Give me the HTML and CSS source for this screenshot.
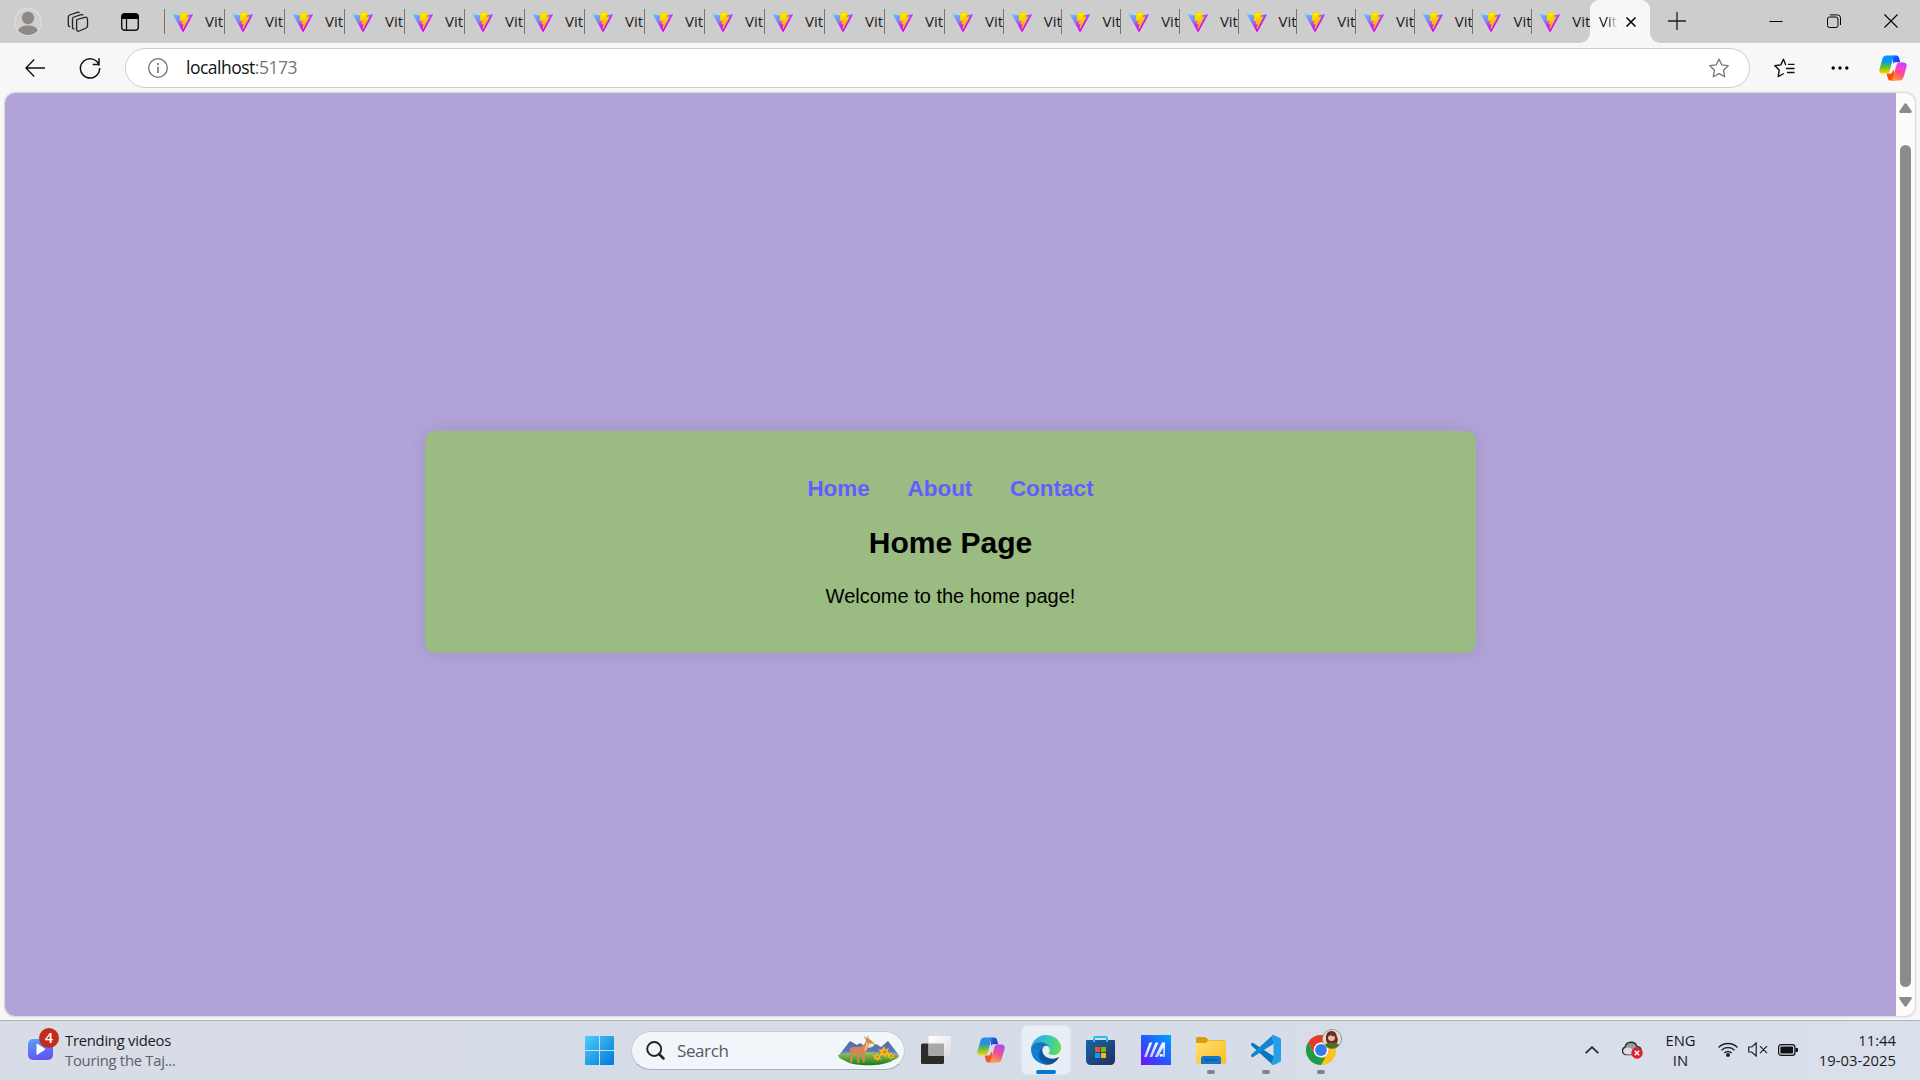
FILE: index.html
```html
<!DOCTYPE html>
<html lang="en">
<head>
<meta charset="utf-8">
<title>Vite + React</title>
<link rel="stylesheet" href="styles.css">
</head>
<body>
<svg class="defs" width="0" height="0" aria-hidden="true">
  <defs>
    <linearGradient id="vite-a" x1="0" x2=".55" y1=".1" y2=".75"><stop offset="0" stop-color="#41D1FF"/><stop offset=".5" stop-color="#9a6cff"/><stop offset="1" stop-color="#D800FF"/></linearGradient>
    <linearGradient id="vite-b" x1="43.4%" x2="50.3%" y1="2.2%" y2="89%"><stop offset="0" stop-color="#FFF000"/><stop offset=".3" stop-color="#FBDD00"/><stop offset="1" stop-color="#FFA800"/></linearGradient>
    <linearGradient id="cp-a" x1="0" y1="0" x2="0" y2="1"><stop offset="0" stop-color="#2b8af0"/><stop offset=".35" stop-color="#2493d0"/><stop offset=".62" stop-color="#6dbb45"/><stop offset="1" stop-color="#f7d51d"/></linearGradient>
    <linearGradient id="cp-b" x1=".7" y1="0" x2=".3" y2="1"><stop offset="0" stop-color="#a94bf2"/><stop offset=".5" stop-color="#f2508e"/><stop offset="1" stop-color="#ffa04a"/></linearGradient>
    <linearGradient id="cp-c" x1="0" y1="0" x2="1" y2="1"><stop offset="0" stop-color="#1d6fe0"/><stop offset="1" stop-color="#3422b8"/></linearGradient>
    <symbol id="vite" viewBox="0 0 256 257">
      <path fill="url(#vite-a)" d="M255.153 37.938L134.897 252.976c-2.483 4.44-8.862 4.466-11.382.048L.875 37.958c-2.746-4.814 1.371-10.646 6.827-9.67l120.385 21.517a6.537 6.537 0 0 0 2.322-.004l117.867-21.483c5.438-.991 9.574 4.796 6.877 9.62Z"/>
      <path fill="url(#vite-b)" stroke="#f3c800" stroke-width="8" d="M185.432.063L96.44 17.501a3.268 3.268 0 0 0-2.634 3.014l-5.474 92.456a3.268 3.268 0 0 0 3.997 3.378l24.777-5.718c2.318-.535 4.413 1.507 3.936 3.838l-7.361 36.047c-.495 2.426 1.782 4.5 4.151 3.78l15.304-4.649c2.372-.72 4.652 1.36 4.15 3.788l-11.698 56.621c-.732 3.542 3.979 5.473 5.943 2.437l1.313-2.028l72.516-144.72c1.215-2.423-.88-5.186-3.54-4.672l-25.505 4.922c-2.396.462-4.435-1.77-3.759-4.114l16.646-57.705c.677-2.35-1.37-4.583-3.769-4.113Z"/>
    </symbol>
    <symbol id="copilot" viewBox="0 0 28 26">
      <path fill="url(#cp-c)" d="M14 .5h3.4c1.3 0 2.1.9 2.500 2.100l1.400 4.600h-4.800c-1.200 0-2 .6-2.400 1.800Z"/>
      <path fill="#f0561d" d="M7.500 18.600h5l2.300-4 1.500 11h-4.900c-1.300 0-2.100-.9-2.500-2.100Z"/>
      <path fill="url(#cp-a)" d="M7.300.5h9.200c-1.200.3-1.800 1.100-2.200 2.300L10.700 15.500c-.6 2-1.600 3.100-3.500 3.100H3.600C.8 18.600-.2 16.400.5 13.900L3.400 4C4.100 1.700 5.200.5 7.300.5Z"/>
      <path fill="url(#cp-b)" d="M20.700 25.500h-9.200c1.200-.3 1.800-1.100 2.200-2.300l3.600-12.700c.6-2 1.600-3.100 3.500-3.100h3.600c2.800 0 3.800 2.200 3.100 4.700L24.600 22c-.7 2.300-1.800 3.500-3.900 3.500Z"/>
    </symbol>
  </defs>
</svg>

<div class="browser">
  <header class="tabstrip">
    <div class="strip-tools">
      <svg class="avatar" width="28" height="28" viewBox="0 0 28 28"><circle cx="14" cy="14" r="13.3" fill="#d0cfcd" stroke="#e0dfdc" stroke-width="1.200"/><circle cx="14" cy="10" r="6.200" fill="#8c8987"/><path fill="#8c8987" d="M4.100 22.600C5.500 19.200 9 17.500 14 17.500s8.500 1.700 9.900 5.100A13 13 0 0 1 14 27 13 13 0 0 1 4.100 22.600Z"/></svg>
      <svg class="workspaces" width="22" height="22" viewBox="0 0 22 22" fill="none" stroke="#222" stroke-width="1.300"><path d="m10.200 8.500 7.600-2.200c1.500-.4 2.700.4 2.700 1.800v7c0 .9-.5 1.600-1.400 1.900l-6.800 3c-1.400.6-2.700-.1-2.700-1.500V9.700c0-.6.200-1 .6-1.200Z"/><path d="M7.300 18c-1 .1-1.800-.6-1.800-1.700V8c0-1.100.5-1.700 1.400-2l7.200-2.300c.9-.3 1.700 0 2.100.7M3.200 15.800C2 15.700 1.300 15 1.300 14V6c0-1 .5-1.600 1.400-2l7.500-2.700c1-.3 1.800 0 2.200.7"/></svg>
      <svg class="tabs-icon" width="18" height="18" viewBox="0 0 18 18"><rect x=".7" y=".7" width="16.600" height="16.600" rx="3" fill="none" stroke="#111" stroke-width="1.400"/><path d="M.5 3.500a3 3 0 0 1 3-3h11a3 3 0 0 1 3 3V6H.5Z" fill="#000"/><path d="M5.500 6v11.500" stroke="#111" stroke-width="1.300"/></svg>
    </div>
    <div class="tabs">
      <div class="tab"><svg><use href="#vite"/></svg><span>Vit</span></div>
      <div class="tab"><svg><use href="#vite"/></svg><span>Vit</span></div>
      <div class="tab"><svg><use href="#vite"/></svg><span>Vit</span></div>
      <div class="tab"><svg><use href="#vite"/></svg><span>Vit</span></div>
      <div class="tab"><svg><use href="#vite"/></svg><span>Vit</span></div>
      <div class="tab"><svg><use href="#vite"/></svg><span>Vit</span></div>
      <div class="tab"><svg><use href="#vite"/></svg><span>Vit</span></div>
      <div class="tab"><svg><use href="#vite"/></svg><span>Vit</span></div>
      <div class="tab"><svg><use href="#vite"/></svg><span>Vit</span></div>
      <div class="tab"><svg><use href="#vite"/></svg><span>Vit</span></div>
      <div class="tab"><svg><use href="#vite"/></svg><span>Vit</span></div>
      <div class="tab"><svg><use href="#vite"/></svg><span>Vit</span></div>
      <div class="tab"><svg><use href="#vite"/></svg><span>Vit</span></div>
      <div class="tab narrow"><svg><use href="#vite"/></svg><span>Vit</span></div>
      <div class="tab narrow"><svg><use href="#vite"/></svg><span>Vit</span></div>
      <div class="tab narrow"><svg><use href="#vite"/></svg><span>Vit</span></div>
      <div class="tab narrow"><svg><use href="#vite"/></svg><span>Vit</span></div>
      <div class="tab narrow"><svg><use href="#vite"/></svg><span>Vit</span></div>
      <div class="tab narrow"><svg><use href="#vite"/></svg><span>Vit</span></div>
      <div class="tab narrow"><svg><use href="#vite"/></svg><span>Vit</span></div>
      <div class="tab narrow"><svg><use href="#vite"/></svg><span>Vit</span></div>
      <div class="tab narrow"><svg><use href="#vite"/></svg><span>Vit</span></div>
      <div class="tab narrow"><svg><use href="#vite"/></svg><span>Vit</span></div>
      <div class="tab narrow"><svg><use href="#vite"/></svg><span>Vit</span></div>
    </div>
    <div class="tab-active"><span>Vit</span><svg width="10" height="10" viewBox="0 0 10 10" stroke="#000" stroke-width="1.500"><path d="m.5.5 9 9m0-9-9 9"/></svg></div>
    <svg class="new-tab" width="18" height="18" viewBox="0 0 18 18" stroke="#1c1c1c" stroke-width="1.300"><path d="M9 0v18M0 9h18"/></svg>
    <div class="window-buttons">
      <svg width="14" height="14" viewBox="0 0 14 14" stroke="#000"><path d="M.5 7.500h13"/></svg>
      <svg width="14" height="14" viewBox="0 0 14 14" fill="none" stroke="#000"><rect x=".5" y="3" width="10.500" height="10.500" rx="2"/><path d="M3 .900h7.500a3 3 0 0 1 3 3V11"/></svg>
      <svg width="14" height="14" viewBox="0 0 14 14" stroke="#000" stroke-width="1.100"><path d="m.5.5 13 13m0-13-13 13"/></svg>
    </div>
  </header>

  <div class="toolbar">
    <svg class="back" width="20" height="18" viewBox="0 0 20 18" fill="none" stroke="#111" stroke-width="1.400"><path d="M9.200.6.900 9l8.300 8.400M1 9h19"/></svg>
    <svg class="reload" width="22" height="22" viewBox="0 0 22 22" fill="none" stroke="#111" stroke-width="1.500"><path d="M20.200 8.600A9.600 9.600 0 1 0 20.600 11M20 1.200v6.300h-6.300"/></svg>
    <div class="address">
      <svg class="info" width="20" height="20" viewBox="0 0 20 20"><circle cx="10" cy="10" r="9.300" fill="none" stroke="#707070" stroke-width="1.300"/><path d="M10 8.500V15" stroke="#707070" stroke-width="1.600"/><circle cx="10" cy="6" r="1.100" fill="#707070"/></svg>
      <span class="url">localhost<span class="port">:5173</span></span>
      <svg class="star" width="20" height="20" viewBox="0 0 20 20" fill="none" stroke="#767676" stroke-width="1.300" stroke-linejoin="round"><path d="m10 1.100 2.700 5.700 6.500.9-4.700 4.500 1.200 6.500-5.700-3.100-5.700 3.100 1.200-6.500L.8 7.700l6.500-.9Z"/></svg>
    </div>
    <svg class="favorites" width="21" height="20" viewBox="0 0 21 20" fill="none" stroke="#111" stroke-width="1.400" stroke-linejoin="round"><path d="M12 6.700h-.3L9.400 1.200 6.800 6.900.8 7.700l4.400 4.400-1 6.500 5.600-3.100"/><path d="M14 6.400h6.500M12 10.500h8.500M13 14.500h7.500"/></svg>
    <svg class="more" width="18" height="4" viewBox="0 0 18 4"><circle cx="2.200" cy="2" r="1.700"/><circle cx="9" cy="2" r="1.700"/><circle cx="15.800" cy="2" r="1.700"/></svg>
    <svg class="sidebar-copilot" width="28" height="26"><use href="#copilot"/></svg>
  </div>

  <div class="viewport">
    <main class="page">
      <section class="card">
        <nav class="links"><a>Home</a><a>About</a><a>Contact</a></nav>
        <h1>Home Page</h1>
        <p>Welcome to the home page!</p>
      </section>
    </main>
    <div class="scrollbar">
      <svg width="13" height="10" viewBox="0 0 13 10"><path d="M5.300.9a1.400 1.400 0 0 1 2.400 0l4.900 7.200c.5.900 0 1.900-1 1.900H1.400c-1 0-1.500-1-1-1.900Z" fill="#8b8b8b"/></svg>
      <div class="thumb"></div>
      <svg width="13" height="10" viewBox="0 0 13 10"><path d="M5.300 9.100a1.400 1.400 0 0 0 2.400 0l4.900-7.200c.5-.9 0-1.900-1-1.900H1.400c-1 0-1.500 1-1 1.900Z" fill="#8b8b8b"/></svg>
    </div>
  </div>
</div>

<footer class="taskbar">
  <div class="widget">
    <svg width="33" height="34" viewBox="0 0 33 34">
      <defs><linearGradient id="vid" x1="0" y1="0" x2=".3" y2="1"><stop stop-color="#5aa2fb"/><stop offset="1" stop-color="#6257f2"/></linearGradient></defs>
      <rect x="1" y="12" width="25" height="21" rx="5" fill="url(#vid)"/><path d="m10 17 8 5.200-8 5.200Z" fill="#fff" stroke="#fff" stroke-linejoin="round"/>
      <circle cx="22" cy="11" r="10" fill="#c42b1c"/><text x="22" y="16" text-anchor="middle" fill="#fff" class="badge">4</text>
    </svg>
    <div class="headline"><span>Trending videos</span><span class="sub">Touring the Taj...</span></div>
  </div>
  <div class="apps">
    <svg class="start" width="29" height="29" viewBox="0 0 29 29"><defs><linearGradient id="win" x1="0" y1="0" x2="1" y2="1"><stop stop-color="#4ccdfd"/><stop offset="1" stop-color="#0078d7"/></linearGradient></defs><path fill="url(#win)" d="M1 0h13v14H0V1a1 1 0 0 1 1-1Zm14 0h13a1 1 0 0 1 1 1v13H15ZM0 15h14v14H1a1 1 0 0 1-1-1Zm15 0h14v13a1 1 0 0 1-1 1H15Z"/></svg>
    <div class="search">
      <svg width="19" height="19" viewBox="0 0 19 19" fill="none" stroke="#222"><circle cx="8.200" cy="8" r="7" stroke-width="1.900"/><path d="m13 13 4.500 4.500" stroke-width="2.500" stroke-linecap="round"/></svg>
      <span>Search</span>
      <svg class="deer" width="61" height="31" viewBox="0 0 61 31">
        <defs><linearGradient id="mt" x1="0" y1="0" x2="0" y2="1"><stop stop-color="#5966ae"/><stop offset=".6" stop-color="#5876bd"/><stop offset="1" stop-color="#a1b9df"/></linearGradient><linearGradient id="gr" x1="0" y1="0" x2="0" y2="1"><stop stop-color="#9cc65b"/><stop offset="1" stop-color="#177b19"/></linearGradient></defs>
        <path fill="url(#mt)" d="M1 20 12 6l7 4 3-2 8 5 4-1 4-3 5 3 7-6 10 13v3H1Z"/>
        <path fill="url(#gr)" d="M0 20c13-3 38-4 61 0 0 4-5 4-7 6-9 5-34 6-45 1-2-2-9-3-9-7Z"/>
        <path fill="#d38654" d="M12 13.500c2-2 5-1.500 9-1.500 4 0 6-3 7-7l-2.500-4 3 2 .8 1V0l1.700 4L35 6.500l-1.500 1.500-2.500.5c-.5 5-1.500 8-4.500 10l.5 9h-2l-1.500-8.500-1.500 0-1 9h-2l.5-9c-2 0-3-.5-4-1l-1.500 9.500h-2L12.500 18Z"/><path fill="#f3bb86" d="M28.500 7c2 0 2 2 1 5s-3 4-4 4c2-2 2-6 3-9Z"/>
        <circle cx="34.500" cy="9.500" r="2.300" fill="#a7ba45"/><circle cx="34" cy="10" r="1.200" fill="#fff"/>
        <g fill="#f9b91c"><path d="m46 11 1.500 3.500L51 13l-1.500 3.500 3 2-4 .5-.5 4-2.500-3-4 1 1.500-3.500-3-3h4Z"/><path d="m39 18 1.200 2.500 3-.5-1.500 2 2 2.500-3-.2-1 2-1.500-2.200-2.700.7 1-2.300-2-2.300h3Z"/><path d="m53 17 1 2.300 2.500-.3-1.500 2 1.500 2-2.600-.2-1 2-1.200-2.300-2.500.3 1-2.300-1.500-1.700h3Z"/></g>
        <g fill="#c7761a"><circle cx="46.500" cy="17" r="1.400"/><circle cx="39.300" cy="22" r="1"/><circle cx="53" cy="21" r="1"/></g>
      </svg>
    </div>
    <div class="app"><svg width="30" height="28" viewBox="0 0 30 28"><defs><linearGradient id="tv" x1="0" y1="0" x2="1" y2="1"><stop stop-color="#fff"/><stop offset="1" stop-color="#dedede"/></linearGradient></defs><rect y="7.500" width="23" height="20.500" rx="1.500" fill="#2c2c2b"/><rect x="7.500" width="22.500" height="20" rx="1.500" fill="url(#tv)"/><path d="M7.500 7.500H23V20H7.500Z" fill="#a9a9a8"/></svg></div>
    <div class="app"><svg width="28" height="26"><use href="#copilot"/></svg></div>
    <div class="app active"><svg width="30" height="30" viewBox="0 0 256 256">
      <defs><linearGradient id="e1" x1=".2" y1=".7" x2="1" y2=".7"><stop stop-color="#0c59a4"/><stop offset="1" stop-color="#114a8b"/></linearGradient><linearGradient id="e2" x1=".7" y1="0" x2=".3" y2="1"><stop stop-color="#1768a8"/><stop offset=".5" stop-color="#1380cf"/><stop offset="1" stop-color="#0b82dc"/></linearGradient><linearGradient id="e3" x1="0" y1=".3" x2="1" y2=".5"><stop stop-color="#2fa5dc"/><stop offset=".5" stop-color="#34c6c4"/><stop offset="1" stop-color="#62de55"/></linearGradient></defs>
      <path fill="url(#e1)" d="M231 190.500c-3.400 1.800-6.900 3.400-10.500 4.700-11.500 4.300-23.600 6.500-35.900 6.500-47.300 0-88.500-32.500-88.500-74.300 0-11.400 6.400-21.900 16.400-27.300-42.800 1.800-53.800 46.400-53.800 72.500 0 73.900 68.100 81.400 82.800 81.400 7.900 0 19.800-2.300 27-4.600l1.300-.4c27.600-9.500 51-28.100 66.600-52.800 2.100-3.300-1.700-7.500-5.400-5.700Z"/>
      <path fill="url(#e2)" d="M105.700 241.400c-8.900-5.500-16.600-12.800-22.700-21.300-27.200-37.200-18.900-89.400 18.300-116.500 3.900-2.800 7.800-5.200 11.200-7.500 3.200-1.500 8.400-4.100 15.500-4 9.900.1 19.200 4.800 25 12.700 4 5.300 6.300 11.700 6.400 18.400 0-.2 24.500-79.500-80-79.500C35.500 43.700.1 85.400.1 121.900-.3 141.200 3.600 160.600 11.800 178.100c27.600 58.800 94.700 87.600 156.400 67.200-20.800 6.600-44.100 4-62.500-3.900Z"/>
      <path fill="url(#e3)" d="M152.300 148.900c-.8 1-3.200 2.500-3.200 5.700 0 2.600 1.700 5.200 4.800 7.300 14.400 10.100 41.700 8.700 41.800 8.700 10.700 0 21.200-2.900 30.500-8.300 18.800-11 30.400-31.200 30.500-53 .3-22.400-8-37.300-11.300-43.900C224.100 23.900 177.700 0 127.300 0 56.200 0 .9 57.200 0 128c.5-36.500 36.800-66 80-66 3.500 0 23.500.3 42 10.100 16.300 8.500 24.900 18.900 30.800 29.100 6.100 10.700 7.200 24.100 7.200 29.500 0 5.300-2.700 13.300-7.700 18.200Z"/>
    </svg></div>
    <div class="app store"><svg width="29" height="29" viewBox="0 0 29 29"><defs><linearGradient id="st" x1="0" y1="0" x2="1" y2="1"><stop stop-color="#1466aa"/><stop offset="1" stop-color="#272e5a"/></linearGradient></defs><path d="M8 5V2.500A1.500 1.500 0 0 1 9.500 1h10A1.500 1.500 0 0 1 21 2.500V5" fill="none" stroke="#29bdec" stroke-width="2"/><path fill="url(#st)" d="M1 4h27a1 1 0 0 1 1 1v19.500a4.500 4.500 0 0 1-4.500 4.500h-20A4.500 4.500 0 0 1 0 24.500V5a1 1 0 0 1 1-1Z"/><path fill="#29bdec" d="M7 4h2v2H7zm13 0h2v2h-2z"/><path fill="#f25022" d="M9 11h5v5H9z"/><path fill="#7fba00" d="M15 11h5v5h-5z"/><path fill="#00a4ef" d="M9 17h5v5H9z"/><path fill="#ffb900" d="M15 17h5v5h-5z"/></svg></div>
    <div class="app"><svg width="30" height="30" viewBox="0 0 30 30"><defs><linearGradient id="ma" x1="1" y1="0" x2="0" y2="1"><stop stop-color="#00a3ff"/><stop offset=".5" stop-color="#245bfb"/><stop offset="1" stop-color="#6d12fb"/></linearGradient><linearGradient id="mw" x1="0" y1="0" x2="0" y2="1"><stop stop-color="#fff"/><stop offset="1" stop-color="#c9c8ff"/></linearGradient></defs><path fill="url(#ma)" d="M0 0h30v30H0z"/><path fill="url(#mw)" d="M8.500 7.500h2.800L5.700 22H3Zm6 0h2.800L11.200 22H8.500Z"/><path fill="url(#mw)" d="M21 7.500h3V22h-1.800V12.500L17 22h-3.300Z"/><circle cx="20.300" cy="20.300" r="1.500" fill="#fff"/></svg></div>
    <div class="app running folder"><svg width="30" height="27" viewBox="0 0 30 27"><defs><linearGradient id="fo" x1="0" y1="0" x2="1" y2="1"><stop stop-color="#ffe179"/><stop offset="1" stop-color="#fcbb1c"/></linearGradient></defs><path fill="#dd9c0a" d="M0 1.500A1.500 1.500 0 0 1 1.500 0H9l4 3h16v6H0Z"/><path fill="url(#fo)" d="M0 6h9.500l3-2.500H29a1 1 0 0 1 1 1v21a1 1 0 0 1-1 1H1a1 1 0 0 1-1-1Z"/><path fill="#1377c5" d="M5 27v-5.500A2.500 2.500 0 0 1 7.500 19h15a2.500 2.500 0 0 1 2.500 2.500V27Z"/><path d="M8.500 23h13" stroke="#07529b" stroke-width="1.300"/></svg></div>
    <div class="app running"><svg width="30" height="30" viewBox="0 0 30 30"><path fill="#0878bd" d="M2.300 8a1.300 1.300 0 0 0-1.600.1L.4 8.500a1.300 1.300 0 0 0 0 1.900L21.500 29.600l2-7.800Z"/><path fill="#1087cf" d="M2.300 22a1.300 1.300 0 0 1-1.600-.1l-.3-.4a1.300 1.300 0 0 1 0-1.900L21.500.4l2 7.800Z"/><path fill="#249fe8" d="M21.500.2c.5-.3 1.100-.3 1.700 0l5.800 2.700c.6.300 1 1 1 1.600v21c0 .7-.4 1.300-1 1.600l-5.800 2.700c-.6.300-1.200.3-1.700 0-.8-.4-1-.9-1-1.700l2-5.700V7.800l-2-5.700c0-.9.300-1.500 1-1.900Z"/></svg></div>
    <div class="app running chrome"><svg width="36" height="36" viewBox="0 0 36 36">
      <circle cx="15" cy="21" r="15" fill="#fcc31f"/><path fill="#e33b2e" d="M2 13.500A15 15 0 0 1 28 13.500H15L8.500 24.800Z"/><path fill="#229a4c" d="M2 13.500 8.600 24.800 15 28.500h6.500L15 36A15 15 0 0 1 2 13.500Z"/><path fill="#fcc31f" d="M15 13.500h13A15 15 0 0 1 15 36l6.500-11.200Z"/><circle cx="15" cy="21" r="7.400" fill="#fff"/><circle cx="15" cy="21" r="5.900" fill="#347ce9"/>
      <circle cx="26" cy="10" r="9.600" fill="#e9ddd0" stroke="#898783" stroke-width=".8"/><path fill="#6b2e23" d="M20 8c0-4 3-6 5.500-6S30 3.500 30.500 6s2.500 4 .5 8l-4 1-5-1c-2.500-1-2-4-2-6Z"/><circle cx="25.500" cy="8.500" r="3.500" fill="#edbd9f"/><path fill="#6b2e23" d="M21.500 7.500c1-4 7-4 8 0-3 0-5-1-5-2 0 1-1 2-3 2Z"/><path fill="#526b2c" d="M19 15.800c2-3 11-3 14 0-2 5-12 5-14 0Z"/>
    </svg></div>
  </div>
  <div class="tray">
    <svg class="chevron" width="14" height="8" viewBox="0 0 14 8" fill="none" stroke="#222" stroke-width="1.600"><path d="m.7 7.200 6.300-6 6.300 6"/></svg>
    <svg class="cloud" width="21" height="18" viewBox="0 0 21 18"><path d="M3.600 13.500A3.800 3.800 0 0 1 3 6.200 6.200 6.200 0 0 1 15 5.600a4 4 0 0 1 1 7.900Z" fill="#999b9d" stroke="#292929" stroke-width="1.400"/><path d="M4 7c4-2 6 2 12 5l-3 1.500H4C0 12 1 8 4 7Z" fill="#dcdddf"/><circle cx="15" cy="12" r="5.700" fill="#dc1f31"/><path d="m12.800 9.800 4.400 4.400m0-4.400-4.400 4.400" stroke="#fff" stroke-width="1.500"/></svg>
    <div class="lang"><span>ENG</span><span>IN</span></div>
    <svg class="wifi" width="20" height="15" viewBox="0 0 20 15" fill="none" stroke="#222" stroke-width="1.400"><path d="M.6 5.400a13.300 13.300 0 0 1 18.800 0M3.500 8.200a9.200 9.200 0 0 1 13 0M6.300 11a5.200 5.200 0 0 1 7.400 0"/><circle cx="10" cy="13" r="2" fill="#222" stroke="none"/></svg>
    <svg class="mute" width="20" height="15" viewBox="0 0 20 15" fill="none" stroke="#222" stroke-width="1.200"><path d="M.7 5v5h3l4.500 4V1L3.700 5ZM12 4.200l7 7m0-7-7 7"/></svg>
    <svg class="battery" width="20" height="12" viewBox="0 0 20 12"><rect x=".6" y=".6" width="16.300" height="10.800" rx="2.600" fill="none" stroke="#111" stroke-width="1.200"/><rect x="2.400" y="2.400" width="12.700" height="7.200" rx="1" fill="#111"/><path d="M17.500 4H19a1 1 0 0 1 1 1v2a1 1 0 0 1-1 1h-1.500Z" fill="#111"/></svg>
    <div class="clock"><span>11:44</span><span>19-03-2025</span></div>
  </div>
</footer>
</body>
</html>
```
FILE: styles.css
```css
* { box-sizing: border-box; }
body {
  margin: 0;
  width: 1920px;
  height: 1080px;
  overflow: hidden;
  display: flex;
  flex-direction: column;
  font-family: "Open Sans", "Noto Sans", sans-serif;
  color: #1b1b1b;
  background: #f7f7f7;
}
svg { display: block; flex: none; }
.defs { position: absolute; }
.browser { height: 1020px; display: flex; flex-direction: column; }

/* Tab strip */
.tabstrip { height: 43px; display: flex; background: #cdcdcd; }
.strip-tools { width: 164px; padding-left: 14px; display: flex; align-items: center; }
.workspaces { margin-left: 25px; }
.tabs-icon { margin-left: 32px; }
.tabs { width: 1426px; display: flex; }
.tab {
  width: 60px;
  flex: none;
  height: 25px;
  margin-top: 9px;
  padding-left: 8px;
  display: flex;
  gap: 12px;
  border-left: 1px solid #747474;
}
.tab.narrow { width: 58.73px; }
.tab svg { width: 20px; height: 20px; margin-top: 3px; }
.tab span, .tab-active span { font-size: 15px; line-height: 20px; margin-top: 2px; flex: none; }
.tab-active {
  position: relative;
  width: 60px;
  height: 43px;
  padding: 9px 0 0 9px;
  display: flex;
  gap: 9px;
  background: #f7f7f7;
  border-radius: 9px 9px 0 0;
}
.tab-active span { width: 18px; color: transparent; background: linear-gradient(90deg, #1b1b1b 50%, #c8c8c8 90%); -webkit-background-clip: text; background-clip: text; }
.tab-active svg { margin-top: 8px; }
.tab-active::before, .tab-active::after { content: ""; position: absolute; bottom: 0; width: 10px; height: 10px; }
.tab-active::before { left: -10px; background: radial-gradient(circle at 0 0, transparent 9.5px, #f7f7f7 10px); }
.tab-active::after { right: -10px; background: radial-gradient(circle at 100% 0, transparent 9.5px, #f7f7f7 10px); }
.new-tab { margin: 12px 0 0 18px; }
.window-buttons { margin-left: auto; padding: 14px 22px 0 0; display: flex; gap: 43.5px; }

/* Toolbar */
.toolbar { height: 50px; display: flex; align-items: center; padding-left: 25px; }
.reload { margin-left: 34px; }
.address {
  width: 1625px;
  height: 40px;
  margin-left: 24px;
  padding: 0 20px 0 22px;
  display: flex;
  align-items: center;
  background: #fff;
  border: 1px solid #cdcdcd;
  border-radius: 20px;
}
.url { margin: -2px 0 0 18px; font-size: 17.5px; line-height: 24px; letter-spacing: -.5px; color: #111; }
.port { color: #767676; }
.star { margin-left: auto; }
.favorites { margin-left: 24px; }
.more { margin-left: 36px; }
.sidebar-copilot { margin-left: 30px; filter: saturate(1.35); }

/* Page */
.viewport {
  height: 923px;
  margin: 0 5px;
  display: flex;
  overflow: hidden;
  border-radius: 10px;
  background: #fcfcfc;
  box-shadow: 0 0 2px 1px rgba(0, 0, 0, .14);
}
.page {
  width: 1891px;
  padding-top: 338px;
  background: #b1a3d8;
  font-family: Arial, "Liberation Sans", sans-serif;
}
.card {
  width: 1051px;
  height: 222px;
  margin: 0 auto;
  padding-top: 45px;
  border-radius: 10px;
  background: #9abb81;
  box-shadow: 0 0 18px rgba(0, 0, 0, .1);
  text-align: center;
  color: #000;
}
.links { display: flex; justify-content: center; gap: 37.5px; font-size: 22.5px; font-weight: 700; line-height: 26px; color: #645cff; }
h1 { margin: 24px 0 0; font-size: 30px; line-height: 34px; }
.card p { margin: 25px 0 0; font-size: 20px; line-height: 23px; }
.scrollbar { width: 19px; padding: 10px 0 9px; display: flex; flex-direction: column; align-items: center; }
.scrollbar svg:last-child { margin-top: auto; }
.thumb { width: 11px; height: 842px; margin-top: 32px; border-radius: 6px; background: #8b8b8b; }

/* Taskbar */
.taskbar {
  height: 60px;
  display: flex;
  border-top: 1px solid #acb1ba;
  background: linear-gradient(90deg, #d8dce6, #d5dce8 50%, #d9dfeb);
}
.widget { width: 585px; padding: 6px 0 0 27px; display: flex; }
.badge { font: 600 14px "Open Sans", sans-serif; }
.headline, .lang, .clock { display: flex; flex-direction: column; font-size: 14.8px; line-height: 20px; }
.headline { margin-left: 5px; padding-top: 3px; letter-spacing: -.25px; }
.sub { color: #5c6068; }
.apps { display: flex; align-items: center; gap: 7px; padding-bottom: 1px; }
.start { margin-right: 10px; }
.search {
  width: 274px;
  height: 39px;
  padding: 0 5px 0 14px;
  display: flex;
  align-items: center;
  border: 1px solid #c4ccd9;
  border-bottom-color: #a5adba;
  border-radius: 20px;
  background: #f2f5fa;
  font-size: 17px;
  color: #555a61;
}
.search span { margin-left: 12px; letter-spacing: -.4px; }
.deer { margin-left: auto; }
.app { position: relative; width: 48px; height: 48px; display: grid; place-items: center; border-radius: 5px; }
.app.active { background: #e9edf5; box-shadow: 0 0 0 1px #e0e5ee; }
.app.active::after, .app.running::after {
  content: "";
  position: absolute;
  left: 20px;
  bottom: 0;
  width: 8px;
  height: 4px;
  border-radius: 2px;
  background: #7d828b;
}
.app.active::after { left: 14px; width: 20px; background: #0078d4; }
.store svg { margin-right: 1px; }
.chrome svg { margin: -6px 0 0 6px; }
.tray { margin-left: auto; padding-right: 24px; display: flex; align-items: center; }
.cloud { margin-left: 23px; }
.lang { width: 75px; text-align: center; align-items: center; }
.mute { margin-left: 10px; }
.battery { margin-left: 10px; }
.clock { width: 98px; align-items: flex-end; }
.lang, .clock { padding-bottom: 1px; }
.tray svg { position: relative; top: -1px; }
```
